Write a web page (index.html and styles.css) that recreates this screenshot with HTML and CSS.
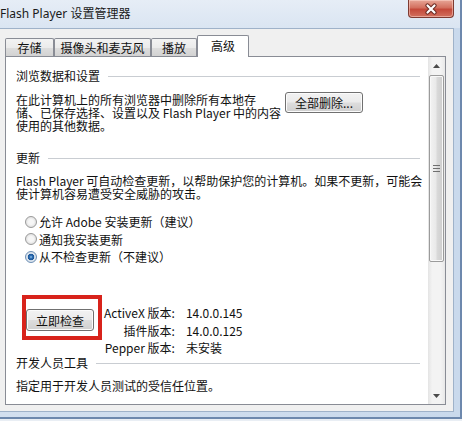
FILE: index.html
```html
<!DOCTYPE html>
<html lang="zh-CN">
<head>
<meta charset="utf-8">
<title>Flash Player 设置管理器</title>
<link rel="stylesheet" href="styles.css">
</head>
<body>
<div class="window">
  <div class="titlebar">
    <span class="title">Flash Player 设置管理器</span>
    <div class="close">
      <svg width="14" height="12" viewBox="0 0 14 12"><path d="M3.5 2.5 L10.5 9.5 M10.5 2.5 L3.5 9.5" stroke="#6b2a22" stroke-width="4.2" stroke-linecap="round"/><path d="M3.5 2.5 L10.5 9.5 M10.5 2.5 L3.5 9.5" stroke="#ffffff" stroke-width="2.2" stroke-linecap="round"/></svg>
    </div>
  </div>
  <div class="client">
    <div class="tabs">
      <div class="tab tab-storage">存储</div>
      <div class="tab tab-camera">摄像头和麦克风</div>
      <div class="tab tab-play">播放</div>
      <div class="tab tab-active">高级</div>
    </div>
    <div class="panel">
      <div class="content">
        <div class="sec-head"><span>浏览数据和设置</span><i class="rule"></i></div>
        <div class="row-browse">
          <div class="para para-browse">
            <div class="line">在此计算机上的所有浏览器中删除所有本地存</div>
            <div class="line">储、已保存选择、设置以及 Flash Player 中的内容</div>
            <div class="line">使用的其他数据。</div>
          </div>
          <button class="btn btn-delete">全部删除...</button>
        </div>
        <div class="sec-head sec-update"><span>更新</span><i class="rule"></i></div>
        <div class="para para-update">
          <div class="line">Flash Player 可自动检查更新，以帮助保护您的计算机。如果不更新，可能会</div>
          <div class="line">使计算机容易遭受安全威胁的攻击。</div>
        </div>
        <div class="radios">
          <div class="radio"><span class="dot"></span><span>允许 Adobe 安装更新（建议）</span></div>
          <div class="radio"><span class="dot"></span><span>通知我安装更新</span></div>
          <div class="radio"><span class="dot dot-on"></span><span>从不检查更新（不建议）</span></div>
        </div>
        <div class="versions">
          <div class="highlight"><button class="btn btn-check">立即检查</button></div>
          <div class="ver-grid">
            <span class="ver-label">ActiveX 版本:</span><span>14.0.0.145</span>
            <span class="ver-label">插件版本:</span><span>14.0.0.125</span>
            <span class="ver-label">Pepper 版本:</span><span>未安装</span>
          </div>
        </div>
        <div class="sec-head sec-dev"><span>开发人员工具</span><i class="rule"></i></div>
        <div class="para para-dev"><div class="line">指定用于开发人员测试的受信任位置。</div></div>
      </div>
      <div class="scrollbar">
        <div class="sb-btn"><svg width="7" height="4" viewBox="0 0 7 4"><polygon points="3.5,0 7,4 0,4" fill="#4a4a4a"/></svg></div>
        <div class="sb-track">
          <div class="sb-thumb">
            <svg width="7" height="7" viewBox="0 0 7 7"><path d="M0 0.5 H7 M0 3.5 H7 M0 6.5 H7" stroke="#6f6f6f" stroke-width="1"/></svg>
          </div>
        </div>
        <div class="sb-btn"><svg width="7" height="4" viewBox="0 0 7 4"><polygon points="0,0 7,0 3.5,4" fill="#4a4a4a"/></svg></div>
      </div>
    </div>
  </div>
</div>
</body>
</html>
```

FILE: styles.css
```css
* { box-sizing: border-box; }
html, body { margin: 0; padding: 0; }
body {
  width: 462px;
  height: 421px;
  overflow: hidden;
  background: #e9eef4;
  font-family: "Noto Sans CJK SC", "Noto Sans", sans-serif;
  font-size: 12px;
  color: #111;
}
.window {
  width: 462px;
  height: 419px;
  display: flex;
  flex-direction: column;
  background: linear-gradient(90deg, #d2dfef 0%, #c9d9ec 100%);
  border-right: 2px solid #6d88ad;
  border-bottom: 2px solid #6d88ad;
}
.titlebar {
  height: 28px;
  flex-shrink: 0;
  display: flex;
  justify-content: space-between;
  align-items: flex-start;
  background: linear-gradient(#e6edf6, #dae5f2);
}
.title {
  font-family: "Noto Sans", "Noto Sans CJK SC", sans-serif;
  font-size: 12px;
  line-height: 28px;
  color: #1a1a1a;
}
.close {
  width: 46px;
  height: 18px;
  margin-right: 6px;
  display: flex;
  align-items: center;
  justify-content: center;
  border: 1px solid #7e3a31;
  border-top: none;
  border-radius: 0 0 4px 4px;
  background: linear-gradient(#e7a697 0%, #d3705f 45%, #c4493a 55%, #d2705e 100%);
  box-shadow: inset 0 0 0 1px rgba(255, 220, 210, 0.5);
}
.client {
  width: 454px;
  height: 384px;
  background: #f0f0f0;
  border-top: 1px solid #9fb2c9;
  border-right: 1px solid #9fb2c9;
  border-bottom: 1px solid #9fb2c9;
}
.tabs {
  height: 27px;
  display: flex;
  align-items: flex-end;
  padding-left: 5px;
}
.tab {
  height: 18px;
  border: 1px solid #898c95;
  border-bottom: none;
  border-radius: 2px 2px 0 0;
  background: linear-gradient(#f3f3f3 0%, #ebebeb 50%, #dedede 51%, #d2d2d2 100%);
  text-align: center;
  line-height: 17px;
  font-size: 12px;
}
.tab-storage { width: 49px; }
.tab-camera { width: 97px; }
.tab-play { width: 46px; }
.tab-active {
  width: 52px;
  height: 22px;
  margin-bottom: -1px;
  position: relative;
  z-index: 1;
  background: #fff;
  line-height: 19px;
}
.panel {
  display: flex;
  margin-left: 5px;
  width: 441px;
  height: 349px;
  border: 1px solid #898c95;
  background: #fff;
}
.content {
  flex: 1;
  min-width: 0;
  padding: 11px 8px 0 10px;
  overflow: hidden;
}
.sec-head {
  display: flex;
  align-items: center;
  gap: 8px;
  height: 16px;
  line-height: 16px;
  white-space: nowrap;
}
.rule {
  flex: 1;
  height: 1px;
  background: #c9cdd2;
  margin-top: 1px;
}
.para {
  margin: 0;
  white-space: nowrap;
}
.line {
  height: 13px;
  line-height: 13px;
}
.row-browse {
  display: flex;
  align-items: flex-start;
  margin-top: 9px;
}
.para-browse { width: 269px; }
.btn {
  font-family: "Noto Sans CJK SC", "Noto Sans", sans-serif;
  font-size: 12px;
  color: #111;
  padding: 0;
  border: 1px solid #707070;
  border-radius: 3px;
  background: linear-gradient(#f2f2f2 0%, #ebebeb 48%, #dddddd 52%, #cfcfcf 100%);
  box-shadow: inset 0 0 0 1px #fbfbfb;
  line-height: 18px;
}
.btn-delete {
  width: 78px;
  height: 21px;
  margin-top: -1px;
}
.sec-update { margin-top: 18px; }
.para-update { margin-top: 8px; }
.radios {
  margin-top: 13px;
  display: flex;
  flex-direction: column;
}
.radio {
  display: flex;
  align-items: center;
  gap: 2px;
  height: 17.5px;
  padding-left: 9px;
  white-space: nowrap;
}
.dot {
  width: 12px;
  height: 12px;
  flex-shrink: 0;
  border-radius: 50%;
  border: 1px solid #9a9a9a;
  background: radial-gradient(circle, #f6f6f6 0 35%, #e2e2e2 70%, #d0d0d0 100%);
}
.dot-on {
  border-color: #6d8fb5;
  background: radial-gradient(circle, #9cc8ee 0, #2d6fb4 1.5px, #1c5597 3px, #dfe8f1 3.6px, #cfd6de 100%);
}
.versions {
  display: flex;
  align-items: flex-start;
  margin-top: 29.5px;
  padding-left: 6px;
}
.highlight {
  border: 4px solid #d8231b;
  padding: 10px 4px 5px 0;
}
.btn-check {
  width: 68px;
  height: 22px;
  line-height: 19px;
}
.ver-grid {
  display: grid;
  grid-template-columns: auto auto;
  column-gap: 11px;
  margin: 9.25px 0 0 2px;
  line-height: 17.5px;
  white-space: nowrap;
}
.ver-label { text-align: right; }
.sec-dev { margin-top: -1.5px; }
.para-dev { margin-top: 8px; }
.scrollbar {
  width: 17px;
  flex-shrink: 0;
  display: flex;
  flex-direction: column;
  background: linear-gradient(90deg, #e4e4e4 0%, #f3f3f3 25%, #f3f3f3 75%, #e8e8e8 100%);
}
.sb-btn {
  height: 17px;
  flex-shrink: 0;
  display: flex;
  align-items: center;
  justify-content: center;
}
.sb-track {
  flex: 1;
  padding-top: 1px;
}
.sb-thumb {
  height: 187px;
  margin: 0 1px;
  border: 1px solid #9b9b9b;
  border-radius: 2px;
  background: linear-gradient(90deg, #f3f3f3 0%, #e9e9e9 45%, #d9d9d9 55%, #cdcdcd 100%);
  box-shadow: inset 0 0 0 1px #f8f8f8;
  display: flex;
  align-items: center;
  justify-content: center;
}
```
